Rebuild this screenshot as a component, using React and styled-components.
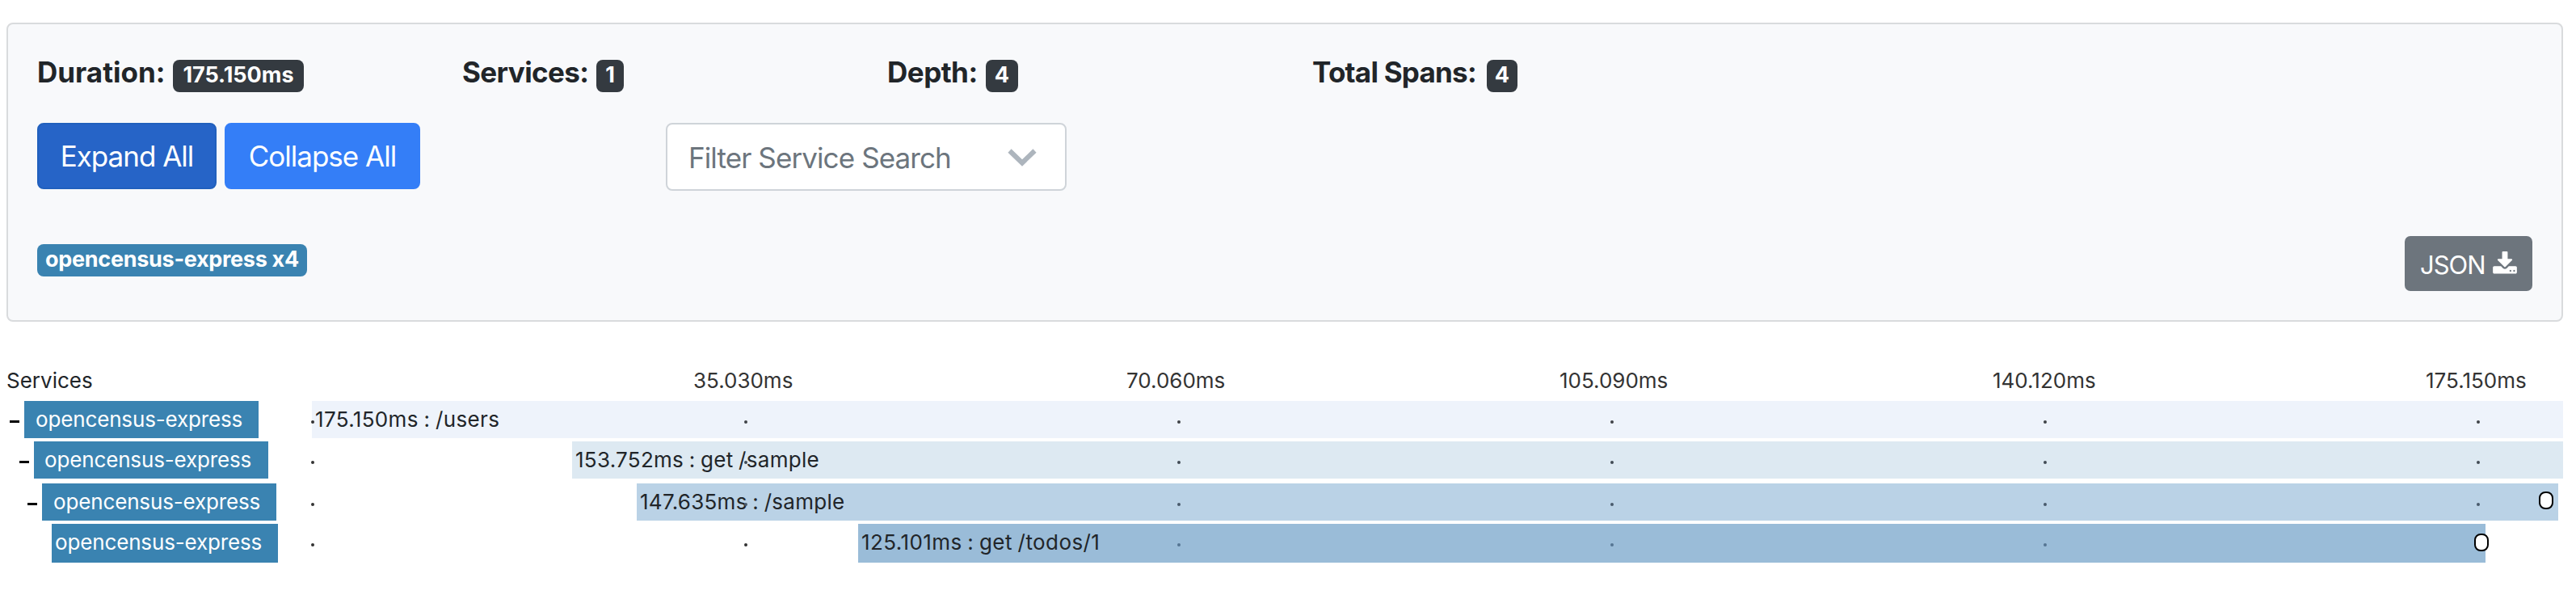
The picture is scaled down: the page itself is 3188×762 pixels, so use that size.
import React from "react";
import styled, { createGlobalStyle } from "styled-components";

const Global = createGlobalStyle`
  *, *::before, *::after { box-sizing: border-box; }
  body {
    margin: 0;
    background: #fff;
    color: #212529;
    font-family: Inter, "Liberation Sans", sans-serif;
    line-height: 1;
  }
`;

const Page = styled.main`
  padding: 28px 16px 0 8px;
`;

const Card = styled.section`
  height: 370px;
  padding: 0 36px;
  border: 2px solid #d9dbdd;
  border-radius: 8px;
  background: #f8f9fb;
`;

const Stats = styled.div`
  display: grid;
  grid-template-columns: repeat(4, 526px);
  padding-top: 44px;
  height: 122px;
`;

const Stat = styled.div`
  display: flex;
  align-items: flex-start;
  font-size: 35px;
  font-weight: 700;
  line-height: 31px;
  white-space: nowrap;
`;

const StatName = styled.span`
  width: ${(p) => p.$width}px;
  letter-spacing: ${(p) => p.$track}px;
`;

const Badge = styled.span`
  display: flex;
  align-items: center;
  justify-content: center;
  height: 40px;
  width: ${(p) => p.$width}px;
  padding-bottom: 4px;
  border-radius: 8px;
  background: ${(p) => (p.$service ? "#3a83b1" : "#343a40")};
  color: #fff;
  font-size: 27px;
  font-weight: 700;
  line-height: 1;
  letter-spacing: ${(p) => (p.$service ? -0.3 : 0)}px;
  white-space: nowrap;
`;

const Controls = styled.div`
  display: flex;
  align-items: flex-start;
  height: 140px;
`;

const Button = styled.button`
  width: ${(p) => p.$width}px;
  height: 82px;
  margin: 0 10px 0 0;
  padding: 0;
  border: 2px solid ${(p) => (p.$active ? "#2160bd" : "#347ef7")};
  border-radius: 8px;
  background: ${(p) => (p.$active ? "#2664c7" : "#347ef7")};
  color: #fff;
  font: 400 35px/78px Inter, sans-serif;
  letter-spacing: -1px;
  white-space: nowrap;
`;

const Select = styled.div`
  display: flex;
  align-items: center;
  justify-content: space-between;
  width: 496px;
  height: 84px;
  margin-left: 294px;
  padding: 2px 35px 0 26px;
  border: 2px solid #cfd4d9;
  border-radius: 8px;
  background: #fff;
  color: #6c757d;
  font-size: 35px;
  letter-spacing: -0.9px;
`;

const Footer = styled.div`
  display: flex;
  justify-content: space-between;
  align-items: flex-start;
`;

const ServiceBadges = styled.div`
  padding-top: 10px;
`;

const JsonButton = styled.button`
  display: flex;
  align-items: center;
  justify-content: space-between;
  width: 158px;
  height: 68px;
  padding: 2px 18px 0 19px;
  border: 0;
  border-radius: 7px;
  background: #6d757d;
  color: #fff;
  font: 400 31px/1 Inter, sans-serif;
  letter-spacing: -1px;
`;

const Trace = styled.section`
  margin-top: 54px;
  font-size: 26px;
`;

const Axis = styled.div`
  display: grid;
  grid-template-columns: 850px repeat(4, 536px) auto;
  height: 44px;
  line-height: 38px;
`;

const Tick = styled.span`
  color: #333;
`;

const Row = styled.div`
  position: relative;
  display: flex;
  height: ${(p) => p.$height}px;
  margin-bottom: ${(p) => p.$gap}px;
`;

const LabelCell = styled.div`
  display: flex;
  flex: 0 0 378px;
  padding-left: ${(p) => p.$indent}px;
`;

const Toggle = styled.span`
  width: 18px;
  height: 3px;
  margin-top: 24px;
  border-right: 6px solid transparent;
  background: #000;
  background-clip: padding-box;
`;

const Label = styled.div`
  width: ${(p) => p.$width}px;
  padding-left: ${(p) => p.$pad}px;
  background: #3a83b1;
  color: #fff;
  line-height: 45px;
  letter-spacing: -0.15px;
  white-space: nowrap;
`;

const Bar = styled.div`
  width: ${(p) => p.$width}px;
  margin-left: ${(p) => p.$offset}px;
  padding-left: 4px;
  background: ${(p) => p.$color};
  line-height: 45px;
  letter-spacing: ${(p) => p.$track}px;
  word-spacing: -1px;
  white-space: nowrap;
`;

const Dot = styled.i`
  position: absolute;
  z-index: 1;
  top: 24px;
  left: ${(p) => p.$x}px;
  width: 4px;
  height: 4px;
  border-radius: 2px;
  background: ${(p) => p.$color};
`;

const Annotation = styled.i`
  position: absolute;
  z-index: 2;
  top: ${(p) => p.$y}px;
  left: ${(p) => p.$x}px;
  width: 18px;
  height: 22px;
  border: 2px solid #000;
  border-radius: 8px;
  background: #fff;
`;

const stats = [
  { name: "Duration:", slot: 168, track: 0, value: "175.150ms", badge: 162 },
  { name: "Services:", slot: 166, track: -0.6, value: "1", badge: 34 },
  { name: "Depth:", slot: 122, track: -0.5, value: "4", badge: 40 },
  { name: "Total Spans:", slot: 216, track: -0.75, value: "4", badge: 38 },
];

const ticks = ["35.030ms", "70.060ms", "105.090ms", "140.120ms", "175.150ms"];
const dots = [377, 913, 1449, 1985, 2521, 3057];

const spans = [
  { text: "175.150ms : /users", track: 0.35, indent: 4, label: 290, pad: 14, start: 378, width: 2786, color: "#eef3fb", dot: "#3f4347", height: 46, gap: 4 },
  { text: "153.752ms : get /sample", track: 0.28, indent: 16, label: 290, pad: 13, start: 700, width: 2464, color: "#dde9f2", dot: "#414b55", height: 46, gap: 6 },
  { text: "147.635ms : /sample", track: 0.28, indent: 26, label: 290, pad: 14, start: 780, width: 2378, color: "#bad2e6", dot: "#485a6c", height: 46, gap: 4, note: [3134, 10] },
  { text: "125.101ms : get /todos/1", track: 0.42, indent: 56, label: 280, pad: 4, start: 1054, width: 2014, color: "#9abcd8", dot: "#557593", height: 48, gap: 0, note: [3054, 12], leaf: true },
];

const Chevron = () => (
  <svg width="36" height="24" viewBox="0 0 36 24">
    <path d="M2.5 3.5L18 18.5L33.5 3.5" fill="none" stroke="#adb5bd" strokeWidth="6" />
  </svg>
);

const Download = () => (
  <svg width="32" height="32" viewBox="0 0 1792 1792" fill="currentColor">
    <path d="M1344 1344q0-26-19-45t-45-19-45 19-19 45 19 45 45 19 45-19 19-45zm256 0q0-26-19-45t-45-19-45 19-19 45 19 45 45 19 45-19 19-45zm128-224v320q0 40-28 68t-68 28h-1472q-40 0-68-28t-28-68v-320q0-40 28-68t68-28h465l135 136q58 56 136 56t136-56l136-136h464q40 0 68 28t28 68zm-325-569q17 41-14 70l-448 448q-18 19-45 19t-45-19l-448-448q-31-29-14-70 17-39 59-39h256v-448q0-26 19-45t45-19h256q26 0 45 19t19 45v448h256q42 0 59 39z" />
  </svg>
);

export default function App() {
  return (
    <Page>
      <Global />
      <Card>
        <Stats>
          {stats.map((s) => (
            <Stat key={s.name}>
              <StatName $width={s.slot} $track={s.track}>{s.name}</StatName>
              <Badge $width={s.badge}>{s.value}</Badge>
            </Stat>
          ))}
        </Stats>
        <Controls>
          <Button $active $width={222}>Expand All</Button>
          <Button $width={242}>Collapse All</Button>
          <Select>
            <span>Filter Service Search</span>
            <Chevron />
          </Select>
        </Controls>
        <Footer>
          <ServiceBadges>
            <Badge $service $width={334}>opencensus-express x4</Badge>
          </ServiceBadges>
          <JsonButton>
            <span>JSON</span>
            <Download />
          </JsonButton>
        </Footer>
      </Card>
      <Trace>
        <Axis>
          <span>Services</span>
          {ticks.map((t) => (
            <Tick key={t}>{t}</Tick>
          ))}
        </Axis>
        {spans.map((s) => (
          <Row key={s.text} $height={s.height} $gap={s.gap}>
            <LabelCell $indent={s.indent}>
              {!s.leaf && <Toggle />}
              <Label $width={s.label} $pad={s.pad}>opencensus-express</Label>
            </LabelCell>
            <Bar $offset={s.start - 378} $width={s.width} $color={s.color} $track={s.track}>{s.text}</Bar>
            {dots.map((x) => (
              <Dot key={x} $x={x} $color={x > s.start ? s.dot : "#333"} />
            ))}
            {s.note && <Annotation $x={s.note[0]} $y={s.note[1]} />}
          </Row>
        ))}
      </Trace>
    </Page>
  );
}
